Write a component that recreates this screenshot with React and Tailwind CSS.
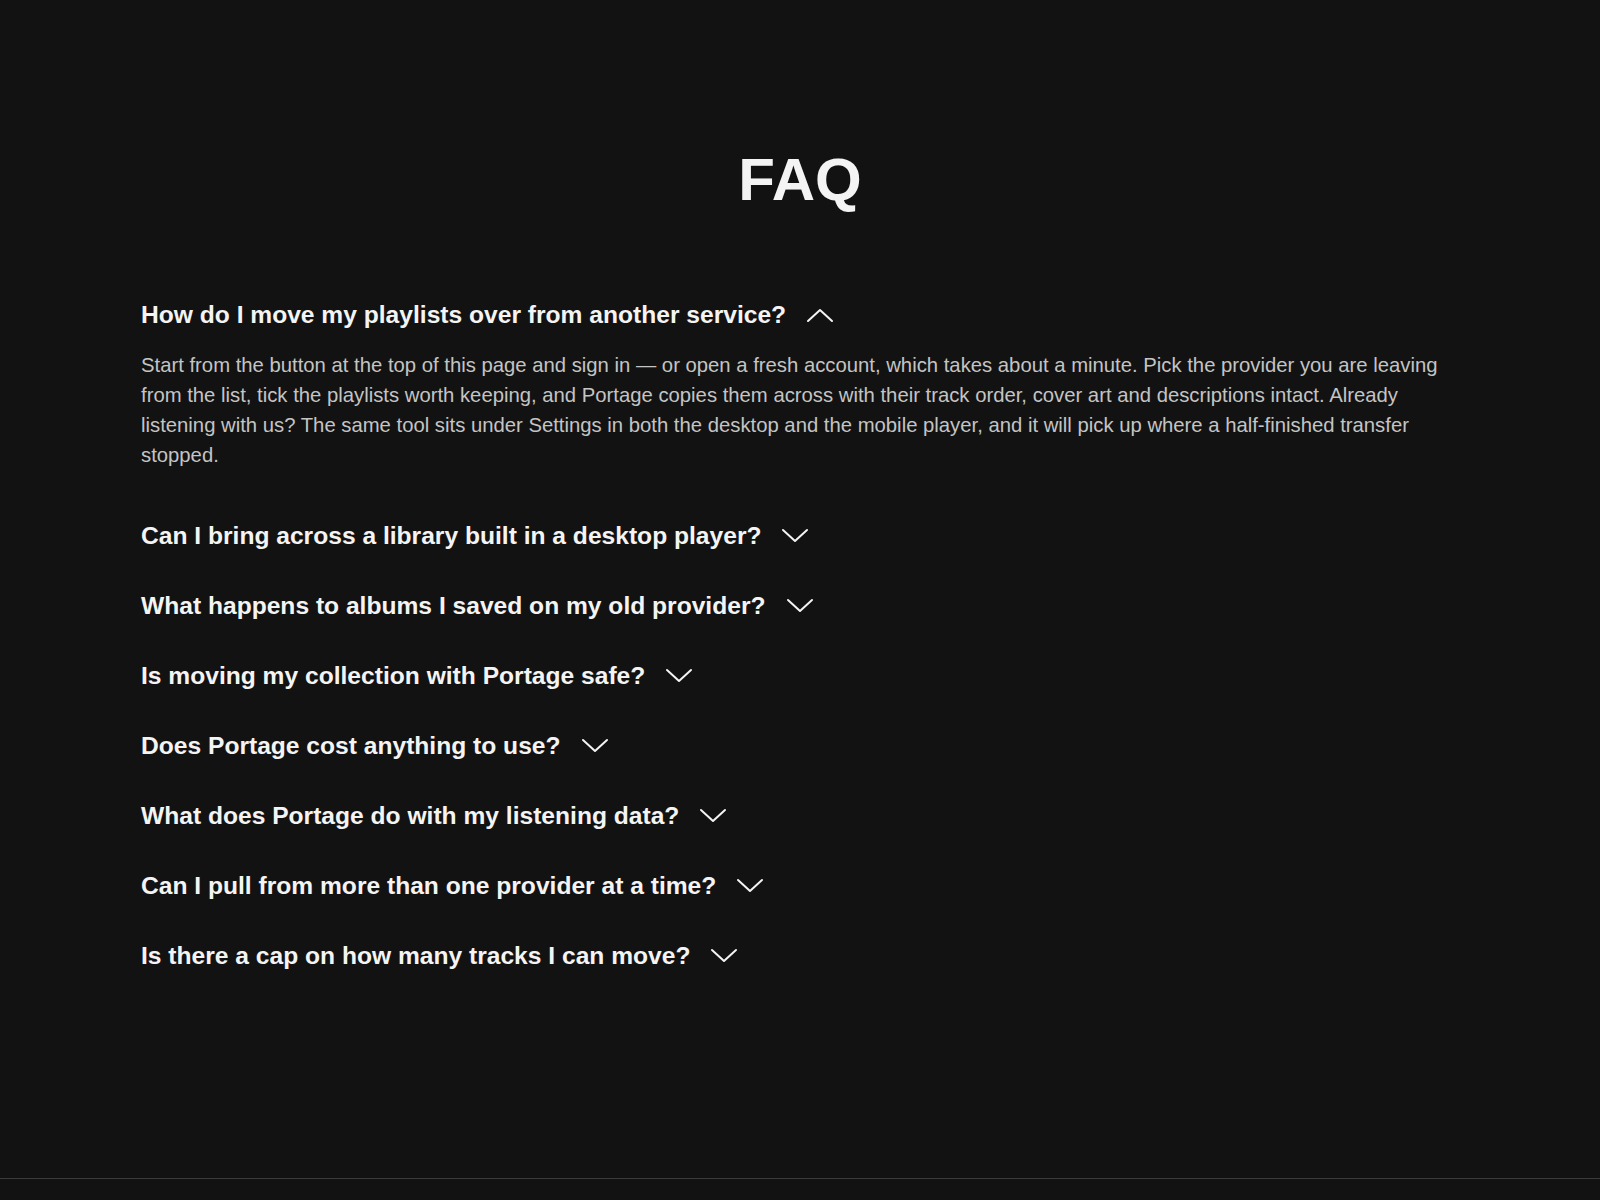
import { useState } from 'react';

const faqs = [
  {
    q: 'How do I move my playlists over from another service?',
    a: 'Start from the button at the top of this page and sign in — or open a fresh account, which takes about a minute. Pick the provider you are leaving from the list, tick the playlists worth keeping, and Portage copies them across with their track order, cover art and descriptions intact. Already listening with us? The same tool sits under Settings in both the desktop and the mobile player, and it will pick up where a half-finished transfer stopped.',
  },
  {
    q: 'Can I bring across a library built in a desktop player?',
    a: 'Yes. Export the library as a playlist file and drop it into the transfer screen.',
  },
  {
    q: 'What happens to albums I saved on my old provider?',
    a: 'Saved albums come across with everything else and land in your library.',
  },
  {
    q: 'Is moving my collection with Portage safe?',
    a: 'We only ask for read access to your old account and never store your password.',
  },
  {
    q: 'Does Portage cost anything to use?',
    a: 'No, transfers are free for every listener.',
  },
  {
    q: 'What does Portage do with my listening data?',
    a: 'Nothing beyond matching your tracks. It is discarded once the transfer ends.',
  },
  {
    q: 'Can I pull from more than one provider at a time?',
    a: 'Yes, connect as many as you like and run the transfers one after another.',
  },
  {
    q: 'Is there a cap on how many tracks I can move?',
    a: 'There is no cap on the number of tracks.',
  },
];

const Chevron = ({ open }) => (
  <svg
    width="28"
    height="16"
    viewBox="0 0 28 16"
    fill="none"
    stroke="currentColor"
    strokeWidth="2"
    strokeLinecap="round"
    strokeLinejoin="round"
    className="shrink-0"
  >
    {open ? <path d="M2 14 L14 3 L26 14" /> : <path d="M2 2 L14 13 L26 2" />}
  </svg>
);

export default function App() {
  const [open, setOpen] = useState(0);

  return (
    <div className="bg-[#121212] text-[#f4f4f4]" style={{ fontFamily: '"Liberation Sans", Arial, sans-serif' }}>
      <section className="h-[1178px] pt-[148px]">
        <h1 className="text-center text-[60px] leading-[64px] font-bold">FAQ</h1>

        <div className="mx-auto mt-[83px] flex w-[1318px] flex-col gap-[30px]">
          {faqs.map((item, i) => (
            <div key={i}>
              <button
                onClick={() => setOpen(open === i ? -1 : i)}
                className="flex h-[40px] items-center gap-[20px] text-left text-[24.6px] font-bold text-[#f4f4f4]"
              >
                <span>{item.q}</span>
                <Chevron open={open === i} />
              </button>
              {open === i && (
                <p className="pt-[15px] pb-[16px] pr-[18px] text-[20.3px] leading-[30px] text-[#c4c4c4]">{item.a}</p>
              )}
            </div>
          ))}
        </div>
      </section>

      <footer className="h-[120px] border-t border-[#3a3a3a]" />
    </div>
  );
}
